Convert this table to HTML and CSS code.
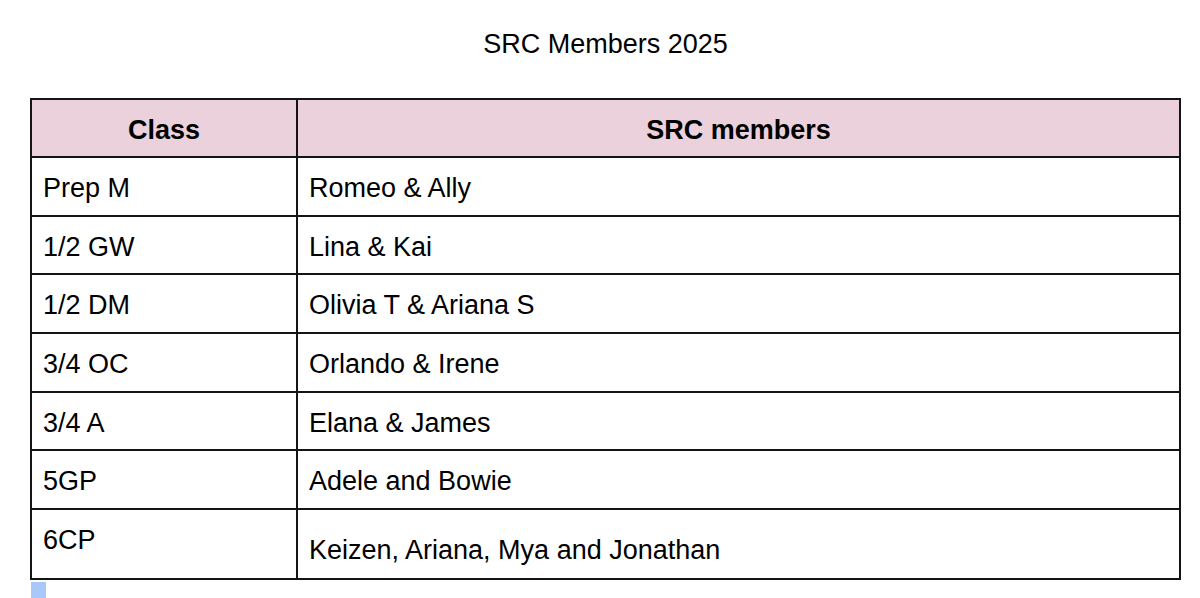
FILE: index.html
```html
<!DOCTYPE html>
<html lang="en">
<head>
<meta charset="utf-8">
<title>SRC Members 2025</title>
<link rel="stylesheet" href="styles.css">
</head>
<body>
<div class="page">
  <h1 class="title">SRC Members 2025</h1>
  <table class="members">
    <thead>
      <tr class="head-row">
        <th class="col-class">Class</th>
        <th class="col-members">SRC members</th>
      </tr>
    </thead>
    <tbody>
      <tr class="row"><td>Prep M</td><td>Romeo &amp; Ally</td></tr>
      <tr class="row"><td>1/2 GW</td><td>Lina &amp; Kai</td></tr>
      <tr class="row"><td>1/2 DM</td><td>Olivia T &amp; Ariana S</td></tr>
      <tr class="row"><td>3/4 OC</td><td>Orlando &amp; Irene</td></tr>
      <tr class="row"><td>3/4 A</td><td>Elana &amp; James</td></tr>
      <tr class="row"><td>5GP</td><td>Adele and Bowie</td></tr>
      <tr class="row row-last"><td>6CP</td><td class="lower">Keizen, Ariana, Mya and Jonathan</td></tr>
    </tbody>
  </table>
  <div class="cursor-mark"></div>
</div>
</body>
</html>
```

FILE: styles.css
```css
html, body {
  margin: 0;
  padding: 0;
  background: #ffffff;
}

body {
  font-family: "Liberation Sans", Arial, sans-serif;
  color: #000000;
  font-size: 27px;
  overflow: hidden;
}

.page {
  margin-left: 30px;
  width: 1151px;
}

.title {
  margin: 0;
  padding-top: 29px;
  font-size: 27px;
  font-weight: normal;
  text-align: center;
  line-height: normal;
  height: 98px;
  box-sizing: border-box;
}

.members {
  border-collapse: collapse;
  width: 1151px;
  table-layout: fixed;
}

.members th,
.members td {
  border: 2px solid #141414;
  vertical-align: top;
  padding: 15px 11px 0 11px;
  font-size: 27px;
  line-height: normal;
  text-align: left;
  box-sizing: border-box;
}

.members th {
  background: #ead1dc;
  font-weight: bold;
  text-align: center;
}

.col-class {
  width: 266px;
}

.head-row {
  height: 58px;
}

.row {
  height: 58.67px;
}

.row-last {
  height: 70px;
}

.members td.lower {
  padding-top: 25px;
}

.cursor-mark {
  margin-top: 2px;
  margin-left: 1px;
  width: 15px;
  height: 18px;
  background: #a8c7fa;
}
```
